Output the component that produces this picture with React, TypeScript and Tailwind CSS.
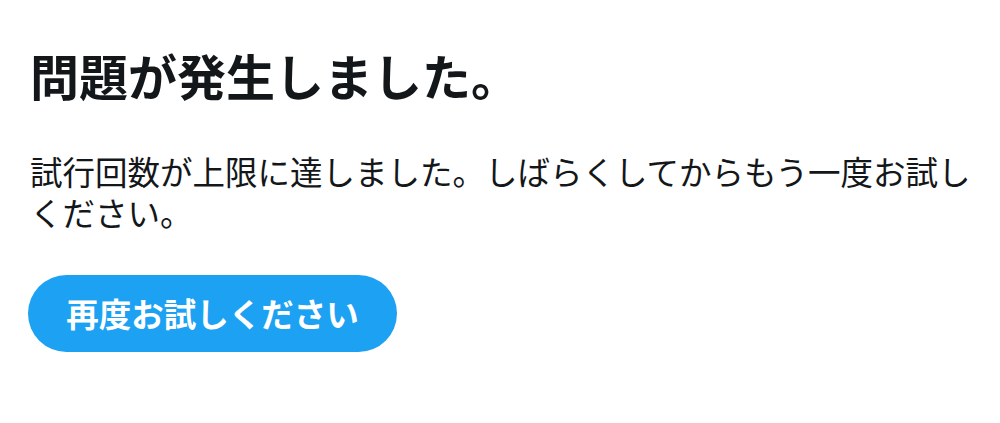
export default function App() {
  return (
    <div
      className="w-[1000px] h-[423px] bg-white text-[#14171a] px-[30px] pt-[50px]"
      style={{ fontFamily: '"Noto Sans CJK JP", "Noto Sans", sans-serif' }}
    >
      <h1 className="text-[49px] leading-[50px] font-bold">問題が発生しました。</h1>
      <p className="mt-[50px] text-[32.5px] leading-[41px] w-[960px]">
        試行回数が上限に達しました。しばらくしてからもう一度お試しください。
      </p>
      <button className="mt-[43px] -ml-[2px] h-[77px] w-[369px] rounded-full bg-[#1da1f2] text-white text-[32.5px] font-bold flex items-center justify-center">
        再度お試しください
      </button>
    </div>
  );
}
